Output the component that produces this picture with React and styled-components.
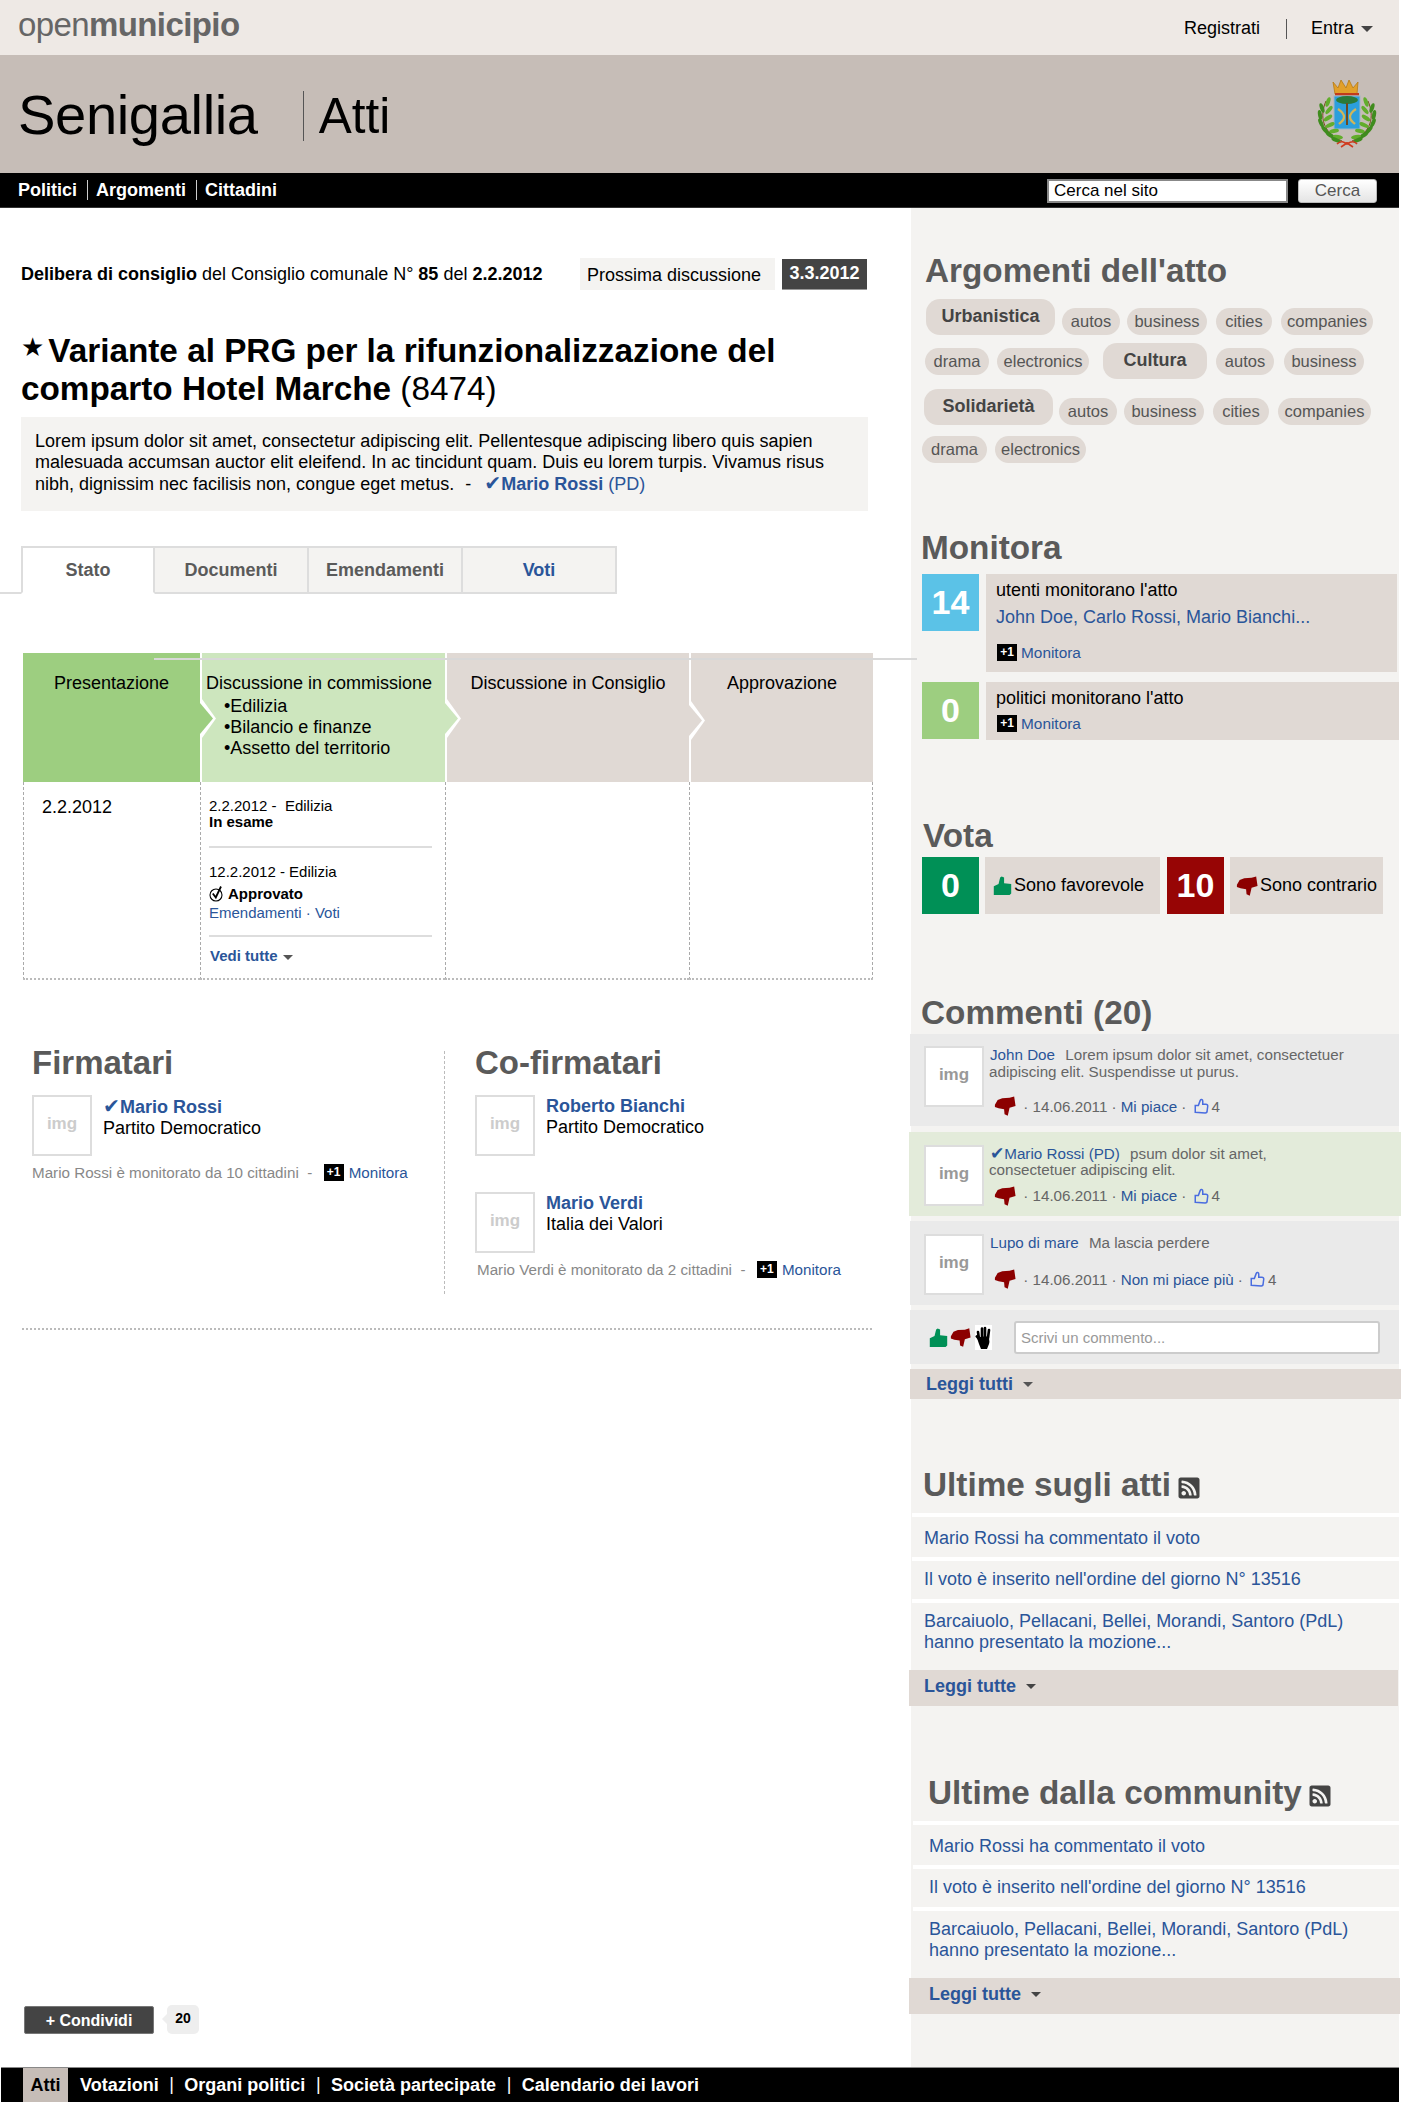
import React from "react";
import styled, { createGlobalStyle } from "styled-components";
import { FaRssSquare } from "react-icons/fa";

const BLUE = "#2a5599";
const HEAD = "#5a5a5a";
const SAND = "#e0d9d4";
const PALE = "#f4f3f1";

const Global = createGlobalStyle`
  html, body { margin: 0; padding: 0; background: #fff; }
  body { font-family: "Liberation Sans", Arial, sans-serif; color: #000; }
  * { box-sizing: border-box; }
  a { color: ${BLUE}; text-decoration: none; }
`;

const Page = styled.div`width: 1399px; position: relative;`;
const TopBar = styled.header`height: 55px; background: #eee9e5; display: flex; align-items: center; justify-content: space-between; padding: 0 26px 0 18px;`;
const Logo = styled.div`font-size: 33px; color: #666; letter-spacing: -0.6px; margin-top: -5px; b { font-weight: 700; }`;
const UserNav = styled.nav`display: flex; align-items: center; font-size: 18px; margin-top: 2px;`;
const UserDivider = styled.span`width: 1px; height: 20px; background: #555; margin: 0 24px 0 26px;`;
const Caret = styled.i`display: inline-block; width: 0; height: 0; border: ${p => p.$s || 5}px solid transparent; border-top-color: ${p => p.$c || "#444"}; border-bottom-width: 0; margin-left: ${p => p.$ml || 7}px; vertical-align: middle;`;
const Band = styled.div`height: 118px; background: #c6bdb7; display: flex; align-items: center; padding: 0 22px 0 18px;`;
const City = styled.h1`font-size: 56.2px; font-weight: 400; margin: 0 45px 0 0; letter-spacing: -0.4px;`;
const Section = styled.div`font-size: 49.5px; margin-top: 4px; padding-left: 15px; border-left: 1px solid #555; line-height: 50px; flex: 1;`;
const NavBar = styled.nav`height: 35px; background: #000; display: flex; align-items: center; padding: 0 22px 0 18px; border-bottom: 1px solid #333;`;
const NavLink = styled.a`color: #fff; font-size: 18px; font-weight: 700; line-height: 20px; padding-right: 10px; margin-right: 8px; border-right: ${p => p.$last ? "0" : "1px solid #ccc"};`;
const SearchInput = styled.input`width: 241px; height: 24px; margin: 1px 0 0 auto; border: 2px solid #888; background: #fff; font: 17px "Liberation Sans", sans-serif; padding: 0 5px; color: #000; &::placeholder { color: #000; opacity: 1; }`;
const SearchButton = styled.button`width: 79px; height: 24px; margin: 1px 0 0 10px; border: 1px solid #bbb; border-radius: 3px; background: linear-gradient(#fff, #e4e4e4); color: #555; font: 17px "Liberation Sans", sans-serif; padding: 0;`;

const Body = styled.div`display: flex; align-items: stretch;`;
const Main = styled.main`width: 911px; flex: none; padding: 50px 0 33px 21px; display: flex; flex-direction: column; position: relative;`;
const Side = styled.aside`width: 488px; flex: none; background: ${PALE};`;

const MetaRow = styled.div`display: flex; align-items: center; height: 32px; font-size: 18px;`;
const MetaText = styled.div`width: 559px; white-space: nowrap;`;
const NextLabel = styled.div`width: 195px; height: 32px; background: ${PALE}; line-height: 34px; padding-left: 7px;`;
const NextDate = styled.div`width: 85px; height: 31px; margin-left: 7px; background: #444; color: #fff; font-weight: 700; text-align: center; line-height: 29px; border-bottom: 1px solid #999;`;
const Title = styled.h2`font-size: 33.3px; line-height: 36px; font-weight: 700; margin: 43px 0 0; width: 860px; span { font-weight: 400; }`;
const Star = styled.span`font-size: 26px; position: relative; top: -6px; margin-right: 4px; font-family: "DejaVu Sans", sans-serif;`;
const Abstract = styled.div`width: 847px; height: 94px; margin-top: 10px; background: ${PALE}; padding: 14px 14px; font-size: 18px; line-height: 21px;`;
const StrongLink = styled.a`font-weight: 700;`;
const Check = styled.span`font-family: "DejaVu Sans", sans-serif; font-weight: 700; font-size: 1.12em; line-height: 1;`;
const Dash = styled.span`margin: 0 8px 0 6px;`;

const Tabs = styled.div`display: flex; margin: 35px 0 0 -21px; height: 48px;`;
const TabSpacer = styled.div`width: 21px; border-bottom: 2px solid #ddd;`;
const Tab = styled.div`width: ${p => p.$w}px; border: 2px solid #ddd; border-left-width: ${p => p.$first ? 2 : 0}px; border-bottom-color: ${p => p.$active ? "#fff" : "#ddd"}; background: ${p => p.$active ? "#fff" : PALE}; color: ${p => p.$link ? BLUE : HEAD}; font-weight: 700; font-size: 18px; text-align: center; line-height: 45px;`;

const Phases = styled.div`margin: 59px 0 0 2px; width: 850px; display: grid; grid-template-columns: 177px 245px 244px 184px;`;
const PhaseHead = styled.div`height: 129px; background: ${p => p.$bg}; border-left: ${p => p.$first ? 0 : "2px solid #fff"}; position: relative; padding-top: 20px; font-size: 18px; line-height: 21px; text-align: ${p => p.$left ? "left" : "center"}; padding-left: ${p => p.$left ? 4 : 0}px;
  &::before, &::after { content: ""; position: absolute; left: 0; width: 14px; clip-path: polygon(0 0, 100% 50%, 0 100%); }
  ${p => p.$arrow ? `
    &::before { top: ${p.$top || 46}px; height: 39px; left: 0; background: #fff; }
    &::after { top: ${(p.$top || 46) + 4}px; height: 31px; left: -2px; width: 13px; background: ${p.$arrow}; }
  ` : ""}`;
const PhaseList = styled.ul`list-style: none; margin: 2px 0 0 18px; padding: 0; li::before { content: "•"; }`;
const StrayRule = styled.div`position: absolute; left: 154px; top: 450px; width: 763px; height: 2px; background: #d8d8d8;`;
const PhaseCell = styled.div`height: 198px; border-left: 1px dashed #aaa; border-right: ${p => p.$last ? "1px dashed #aaa" : 0}; border-bottom: 2px dotted #bbb; padding: ${p => p.$date ? "15px 0 0 18px" : "16px 13px 0 8px"}; font-size: ${p => p.$date ? 18 : 15}px; line-height: ${p => p.$date ? "21px" : "16px"};`;
const Rule = styled.div`height: 2px; background: #ddd; margin: ${p => p.$m};`;
const ApprovedRow = styled.div`display: flex; align-items: center; gap: 4px; font-weight: 700; height: 22px; margin-top: 3px;`;
const SeeAll = styled.a`font-weight: 700; display: block; margin-left: 1px;`;

const Signers = styled.div`display: flex; margin: 71px 0 0 0; height: 243px;`;
const SignerCol = styled.div`width: ${p => p.$w}px; padding-left: ${p => p.$pl}px; border-right: ${p => p.$rule ? "1px dashed #bbb" : 0};`;
const ColTitle = styled.h3`font-size: 33px; line-height: 24px; color: ${HEAD}; margin: 0 0 20px;`;
const Signer = styled.div`display: flex; gap: 11px; margin-top: ${p => p.$mt || 0}px;`;
const Avatar = styled.div`width: 60px; height: 61px; flex: none; background: #fff; border: 2px solid #ddd; display: flex; align-items: center; justify-content: center; color: ${p => p.$dark ? "#999" : "#ccc"}; font-weight: 700; font-size: 17px; padding-bottom: 3px;`;
const SignerInfo = styled.div`font-size: 18px; line-height: 21px; padding-top: 1px;`;
const Follow = styled.div`display: flex; align-items: center; height: 20px; margin: 6px 0 0 ${p => p.$ml || 0}px; font-size: 15.2px; color: #888; white-space: nowrap;`;
const PlusOne = styled.span`display: inline-flex; width: 20px; height: 17px; background: #000; color: #fff; font-size: 12px; font-weight: 700; align-items: center; justify-content: center; flex: none; margin: ${p => p.$m || "0 4px 0 0"};`;
const DottedRule = styled.div`width: 850px; margin: 34px 0 0 1px; border-top: 2px dotted #bbb;`;

const Share = styled.div`display: flex; align-items: center; gap: 13px; margin: auto 0 0 3px; height: 29px;`;
const ShareButton = styled.div`width: 130px; height: 28px; background: #444; border: 1px solid #777; border-radius: 2px; color: #fff; font-weight: 700; font-size: 16px; text-align: center; line-height: 28px;`;
const ShareCount = styled.div`width: 32px; height: 29px; background: #eee; border-radius: 5px; font-weight: 700; font-size: 14px; text-align: center; line-height: 26px; position: relative;
  &::before { content: ""; position: absolute; left: -5px; top: 9px; border: 5px solid transparent; border-left: 0; border-right-color: #eee; }`;

const SideTitle = styled.h2`font-size: ${p => p.$fs || 33.3}px; line-height: 36px; color: ${HEAD}; margin: ${p => p.$mt}px 0 0 ${p => p.$x}px; white-space: nowrap; display: flex; align-items: center; svg { margin-left: 6px; color: #444; margin-top: 6px; }`;
const TagRow = styled.div`display: flex; align-items: ${p => p.$align}; margin: ${p => p.$mt}px 0 0 ${p => p.$x}px;`;
const TagPill = styled.span`display: block; flex: none; width: ${p => p.$w}px; height: ${p => p.$big ? 36 : 27}px; margin-left: ${p => p.$ml || 0}px; border-radius: 14px; background: ${SAND}; color: ${p => p.$big ? "#444" : "#555"}; font-weight: ${p => p.$big ? 700 : 400}; font-size: ${p => p.$big ? 18 : 16.5}px; text-align: center; line-height: ${p => p.$big ? 35 : 27}px;`;
const SideEnd = styled.div`height: 53px;`;

const Stat = styled.div`display: flex; gap: ${p => p.$gap || 7}px; margin: ${p => p.$mt}px 0 0 11px; align-items: flex-start;`;
const StatNumber = styled.div`width: 57px; height: 57px; flex: none; background: ${p => p.$bg}; color: #fff; font-weight: 700; font-size: 34px; text-align: center; line-height: 57px;`;
const StatPanel = styled.div`flex: 1; height: ${p => p.$h}px; background: ${SAND}; padding: 6px 10px; font-size: 18px; line-height: 21px; margin-right: ${p => p.$mr || 0}px;`;
const Names = styled.a`display: block; font-size: 18px; margin-top: 6px;`;
const FollowRow = styled.div`display: flex; align-items: center; margin-top: ${p => p.$mt}px; height: 18px; font-size: 15.4px; padding-left: 1px;`;
const VoteRow = styled.div`display: flex; margin: 3px 0 0 11px;`;
const VotePanel = styled.div`width: ${p => p.$w}px; height: 57px; background: ${SAND}; display: flex; align-items: center; gap: 2px; padding-left: ${p => p.$pl}px; font-size: 18px; margin: 0 ${p => p.$mr || 0}px 0 6px; white-space: nowrap;`;

const Comment = styled.article`margin: ${p => p.$mt}px ${p => p.$green ? -2 : 0}px 0 ${p => p.$green ? -2 : -1}px; height: ${p => p.$h}px; background: ${p => p.$green ? "#e3ebda" : "#eaeaea"}; display: flex; gap: 5px; padding: ${p => p.$pt}px 0 0 ${p => p.$green ? 15 : 14}px;`;
const CommentBody = styled.div`font-size: 15.2px; line-height: ${p => p.$lh || 17}px; color: #666; flex: 1;`;
const CommentAuthor = styled.a`margin: 0 6px 0 1px;`;
const CommentMeta = styled.div`display: flex; align-items: center; gap: 3px; height: 20px; margin: ${p => p.$mt}px 0 0 5px; white-space: nowrap; a { margin: 0 1px; }`;
const CommentForm = styled.div`margin: 5px 0 0 -1px; height: 54px; background: #eaeaea; display: flex; align-items: center; padding-left: 19px; gap: 2px;`;
const CommentInput = styled.input`width: 366px; height: 33px; margin-left: 20px; border: 2px solid #ccc; border-radius: 3px; background: #fff; font: 15px "Liberation Sans", sans-serif; padding: 0 5px; &::placeholder { color: #999; opacity: 1; }`;
const HandBox = styled.span`display: inline-flex; background: #fff; width: 17px; height: 25px; align-items: center; justify-content: center; margin-left: 2px;`;
const ReadMore = styled.div`margin: ${p => p.$mt || 0}px ${p => p.$mr}px 0 ${p => p.$ml}px; height: ${p => p.$h}px; background: ${SAND}; padding-left: ${p => p.$pl}px; font-size: 18px; font-weight: 700; display: flex; align-items: center; color: ${BLUE}; padding-bottom: ${p => p.$pb || 0}px;`;
const FeedList = styled.div`margin: ${p => p.$mt}px 0 0 ${p => p.$x}px;`;
const FeedItem = styled.a`display: block; border-top: 4px solid #fff; height: ${p => p.$h}px; padding: ${p => p.$pt}px 0 0 ${p => p.$pl}px; font-size: 18px; line-height: 21px; background: ${PALE};`;

const Footer = styled.footer`height: 35px; margin-left: 1px; background: #000; border-top: 1px solid #888; display: flex; align-items: stretch; padding-left: 22px; font-size: 18px; font-weight: 700; color: #fff; margin-bottom: 10px;`;
const FooterActive = styled.div`width: 45px; background: #c6bdb7; color: #000; text-align: center; line-height: 34px; margin-right: 12px;`;
const FooterLink = styled.a`color: #fff; line-height: 34px;`;
const FooterSep = styled.span`font-weight: 400; line-height: 33px; margin: 0 10.5px;`;

const ThumbSolid = ({ s = 20, c = "#009056" }) => (
  <svg width={s} height={s} viewBox="0 0 24 24" aria-hidden="true"><path d="M1 24V13l6-3 2-8 2-1.500 3 1.500v7l9 1v12l-2 2z" fill={c} /></svg>
);
const ThumbDown = ({ s = 22, c = "#8c0000" }) => (
  <svg width={s} height={s} viewBox="0 0 24 24" aria-hidden="true"><path d="M1 10.500 4 5.500 9 3.500 17 3 22 1.500 23.500 12 17 14 15 22.500 11.500 21 11 15.500 5 14.500 1 13z" fill={c} /></svg>
);
const ThumbOutline = () => (
  <svg width={15} height={16} viewBox="0 0 24 24" aria-hidden="true"><path d="M2 22V11h5l3-8c1-2 4-2 4 1v5h5c2 0 3 1 3 3l-1 8c0 2-1 3-3 3z" fill="none" stroke="#4a6de0" strokeWidth="2.400" /></svg>
);
const HandIcon = () => (
  <svg width={17} height={25} viewBox="0 0 17 25" aria-hidden="true">
    <g stroke="#000" strokeWidth="2.600" strokeLinecap="round" fill="none">
      <path d="M4 14 3 7M7 12V3.500M10 12V3M13 13l1-8M4 14 1.800 11.500" />
    </g>
    <path d="M2 13c0-1 12-2 12-1 0 4 1 4 0 7l-2 5H6l-2-5z" fill="#000" />
  </svg>
);
const CheckCircle = () => (
  <svg width={15} height={17} viewBox="0 0 15 17" aria-hidden="true"><circle cx="7" cy="9" r="6" fill="none" stroke="#000" strokeWidth="1.100" /><path d="M3.800 7.500l3 4L12 0.500" fill="none" stroke="#000" strokeWidth="1.800" /></svg>
);
const Leaf = ({ x, y, r, c = "#4d9a24" }) => <ellipse cx={x} cy={y} rx="5" ry="2" fill={c} transform={`rotate(${r} ${x} ${y})`} />;
const LEAVES = [
  [11, 23, -70], [5, 29, 70], [12, 31, -50], [3, 36, 80], [11, 39, -35], [4, 44, 65], [13, 46, -25], [8, 51, 50], [17, 52, -10], [13, 56, 35], [21, 58, 10], [19, 61, 25],
];
const Crest = () => (
  <svg width={60} height={70} viewBox="0 0 60 70" aria-hidden="true">
    <path d="M18 15l-2-12 5 6 3-8 5 8 3-8 4 8 5-6-1 12z" fill="#e2a02a" stroke="#b87a10" strokeWidth=".8" />
    <rect x="18" y="14" width="24" height="2.500" fill="#c23b1c" />
    <rect x="17" y="17" width="26" height="33" fill="#2c9fdc" stroke="#9fb6c6" />
    <ellipse cx="30" cy="21" rx="11" ry="4" fill="#2a7a3a" />
    <rect x="29" y="24" width="2" height="22" fill="#6b4b22" />
    <path d="M21 30c3 2 6 4 6 8s-3 5-5 7M39 30c-3 2-6 4-6 8s3 5 5 7" fill="none" stroke="#d2b658" strokeWidth="2.200" />
    <path d="M9 22C2 38 6 54 25 62M51 22c7 16 3 32-16 40" fill="none" stroke="#7a4a20" strokeWidth="1" />
    {LEAVES.map(([x, y, r], i) => <Leaf key={i} x={x} y={y} r={r} c={i % 2 ? "#3f8c1e" : "#62ad2c"} />)}
    {LEAVES.map(([x, y, r], i) => <Leaf key={i} x={60 - x} y={y} r={-r} c={i % 2 ? "#3f8c1e" : "#62ad2c"} />)}
    <path d="M20 65c4-4 7-2 10 0 3-2 7-4 10 0M24 68l6-4 6 4" fill="none" stroke="#d03a1e" strokeWidth="1.600" />
  </svg>
);

const TAGS = [
  { align: "flex-end", mt: 10, x: 15, items: [["Urbanistica", 129, 0, 1], ["autos", 58, 7], ["business", 80, 7], ["cities", 56, 9], ["companies", 92, 9]] },
  { align: "center", mt: 8, x: 14, items: [["drama", 64, 0], ["electronics", 92, 8], ["Cultura", 104, 14, 1], ["autos", 58, 9], ["business", 80, 10]] },
  { align: "flex-end", mt: 10, x: 13, items: [["Solidarietà", 129, 0, 1], ["autos", 58, 6], ["business", 80, 7], ["cities", 56, 9], ["companies", 93, 9]] },
  { align: "flex-end", mt: 11, x: 11, items: [["drama", 65, 0], ["electronics", 91, 8]] },
];

const FEED = (pl) => (
  <>
    <FeedItem href="#" $h={44} $pt={11} $pl={pl}>Mario Rossi ha commentato il voto</FeedItem>
    <FeedItem href="#" $h={42} $pt={8} $pl={pl}>Il voto è inserito nell'ordine del giorno N° 13516</FeedItem>
    <FeedItem href="#" $h={71} $pt={8} $pl={pl}>Barcaiuolo, Pellacani, Bellei, Morandi, Santoro (PdL)<br />hanno presentato la mozione...</FeedItem>
  </>
);

const Meta = ({ mt, text = "Mi piace" }) => (
  <CommentMeta $mt={mt}>
    <ThumbDown />
    <span>&nbsp;· 14.06.2011 ·</span>
    <a href="#">{text}</a>
    <span>·&nbsp;</span>
    <ThumbOutline />
    <span>4</span>
  </CommentMeta>
);

export default function App() {
  return (
    <Page>
      <Global />
      <TopBar>
        <Logo>open<b>municipio</b></Logo>
        <UserNav>Registrati<UserDivider />Entra<Caret $s={6} /></UserNav>
      </TopBar>
      <Band>
        <City>Senigallia</City>
        <Section>Atti</Section>
        <Crest />
      </Band>
      <NavBar>
        <NavLink href="#">Politici</NavLink>
        <NavLink href="#">Argomenti</NavLink>
        <NavLink href="#" $last>Cittadini</NavLink>
        <SearchInput placeholder="Cerca nel sito" />
        <SearchButton>Cerca</SearchButton>
      </NavBar>
      <Body>
        <Main>
          <MetaRow>
            <MetaText><b>Delibera di consiglio</b> del Consiglio comunale N° <b>85</b> del <b>2.2.2012</b></MetaText>
            <NextLabel>Prossima discussione</NextLabel>
            <NextDate>3.3.2012</NextDate>
          </MetaRow>
          <Title><Star>★</Star>Variante al PRG per la rifunzionalizzazione del<br />comparto Hotel Marche <span>(8474)</span></Title>
          <Abstract>
            Lorem ipsum dolor sit amet, consectetur adipiscing elit. Pellentesque adipiscing libero quis sapien malesuada accumsan auctor elit eleifend. In ac tincidunt quam. Duis eu lorem turpis. Vivamus risus nibh, dignissim nec facilisis non, congue eget metus. <Dash>-</Dash> <StrongLink href="#"><Check>✔</Check>Mario Rossi</StrongLink> <a href="#">(PD)</a>
          </Abstract>
          <Tabs>
            <TabSpacer />
            <Tab $w={134} $first $active>Stato</Tab>
            <Tab $w={154}>Documenti</Tab>
            <Tab $w={154}>Emendamenti</Tab>
            <Tab $w={154} $link>Voti</Tab>
          </Tabs>
          <Phases>
            <PhaseHead $bg="#9dce80" $first>Presentazione</PhaseHead>
            <PhaseHead $bg="#cde6be" $arrow="#9dce80" $left>
              Discussione in commissione
              <PhaseList><li>Edilizia</li><li>Bilancio e finanze</li><li>Assetto del territorio</li></PhaseList>
            </PhaseHead>
            <PhaseHead $bg={SAND} $arrow="#cde6be">Discussione in Consiglio</PhaseHead>
            <PhaseHead $bg={SAND} $arrow={SAND} $top={48}>Approvazione</PhaseHead>
            <PhaseCell $date>2.2.2012</PhaseCell>
            <PhaseCell>
              2.2.2012 -&nbsp; Edilizia<br /><b>In esame</b>
              <Rule $m="16px 0" />
              12.2.2012 - Edilizia
              <ApprovedRow><CheckCircle />Approvato</ApprovedRow>
              <a href="#">Emendamenti · Voti</a>
              <Rule $m="14px 0 11px" />
              <SeeAll href="#">Vedi tutte<Caret $c="#555" $ml={5} /></SeeAll>
            </PhaseCell>
            <PhaseCell />
            <PhaseCell $last />
          </Phases>
          <StrayRule />
          <Signers>
            <SignerCol $w={424} $pl={11} $rule>
              <ColTitle>Firmatari</ColTitle>
              <Signer>
                <Avatar>img</Avatar>
                <SignerInfo><StrongLink href="#"><Check>✔</Check>Mario Rossi</StrongLink><br />Partito Democratico</SignerInfo>
              </Signer>
              <Follow>Mario Rossi è monitorato da 10 cittadini &nbsp;-&nbsp;&nbsp;<PlusOne $m="0 5px 0 3px">+1</PlusOne><a href="#">Monitora</a></Follow>
            </SignerCol>
            <SignerCol $w={426} $pl={30}>
              <ColTitle>Co-firmatari</ColTitle>
              <Signer>
                <Avatar>img</Avatar>
                <SignerInfo><StrongLink href="#">Roberto Bianchi</StrongLink><br />Partito Democratico</SignerInfo>
              </Signer>
              <Signer $mt={36}>
                <Avatar>img</Avatar>
                <SignerInfo><StrongLink href="#">Mario Verdi</StrongLink><br />Italia dei Valori</SignerInfo>
              </Signer>
              <Follow $ml={2}>Mario Verdi è monitorato da 2 cittadini &nbsp;-&nbsp;&nbsp;<PlusOne $m="0 5px 0 3px">+1</PlusOne><a href="#">Monitora</a></Follow>
            </SignerCol>
          </Signers>
          <DottedRule />
          <Share>
            <ShareButton>+ Condividi</ShareButton>
            <ShareCount>20</ShareCount>
          </Share>
        </Main>
        <Side>
          <SideTitle $mt={45} $x={14}>Argomenti dell'atto</SideTitle>
          {TAGS.map((row, i) => (
            <TagRow key={i} $align={row.align} $mt={row.mt} $x={row.x}>
              {row.items.map(([label, w, ml, big]) => (
                <TagPill key={label} $w={w} $ml={ml} $big={big}>{label}</TagPill>
              ))}
            </TagRow>
          ))}

          <SideTitle $mt={67} $x={10}>Monitora</SideTitle>
          <Stat $mt={8}>
            <StatNumber $bg="#5bc2e7">14</StatNumber>
            <StatPanel $h={98} $mr={2}>
              utenti monitorano l'atto
              <Names href="#">John Doe, Carlo Rossi, Mario Bianchi...</Names>
              <FollowRow $mt={15}><PlusOne>+1</PlusOne><a href="#">Monitora</a></FollowRow>
            </StatPanel>
          </Stat>
          <Stat $mt={10}>
            <StatNumber $bg="#9dce80">0</StatNumber>
            <StatPanel $h={58}>
              politici monitorano l'atto
              <FollowRow $mt={5}><PlusOne>+1</PlusOne><a href="#">Monitora</a></FollowRow>
            </StatPanel>
          </Stat>

          <SideTitle $mt={78} $x={12}>Vota</SideTitle>
          <VoteRow>
            <StatNumber $bg="#009056">0</StatNumber>
            <VotePanel $w={175} $pl={8} $mr={7}><ThumbSolid s={19} />Sono favorevole</VotePanel>
            <StatNumber $bg="#970505">10</StatNumber>
            <VotePanel $w={153} $pl={6}><ThumbDown />Sono contrario</VotePanel>
          </VoteRow>

          <SideTitle $mt={81} $x={10}>Commenti (20)</SideTitle>
          <Comment $mt={3} $h={92} $pt={12}>
            <Avatar $dark>img</Avatar>
            <CommentBody>
              <CommentAuthor href="#">John Doe</CommentAuthor> Lorem ipsum dolor sit amet, consectetuer<br />adipiscing elit. Suspendisse ut purus.
              <Meta mt={16} />
            </CommentBody>
          </Comment>
          <Comment $mt={6} $h={84} $pt={13} $green>
            <Avatar $dark>img</Avatar>
            <CommentBody $lh={16}>
              <CommentAuthor href="#"><Check>✔</Check>Mario Rossi (PD)</CommentAuthor> psum dolor sit amet,<br />consectetuer adipiscing elit.
              <Meta mt={8} />
            </CommentBody>
          </Comment>
          <Comment $mt={5} $h={84} $pt={13}>
            <Avatar $dark>img</Avatar>
            <CommentBody>
              <CommentAuthor href="#">Lupo di mare</CommentAuthor> Ma lascia perdere
              <Meta mt={18} text="Non mi piace più" />
            </CommentBody>
          </Comment>
          <CommentForm>
            <ThumbSolid s={19} />
            <ThumbDown s={21} />
            <HandBox><HandIcon /></HandBox>
            <CommentInput placeholder="Scrivi un commento..." />
          </CommentForm>
          <ReadMore $mt={5} $ml={-1} $mr={-2} $h={30} $pl={16}>Leggi tutti<Caret $c="#555" $ml={10} /></ReadMore>

          <SideTitle $mt={68} $x={12}>Ultime sugli atti<FaRssSquare size={24} /></SideTitle>
          <FeedList $mt={10} $x={1}>{FEED(12)}</FeedList>
          <ReadMore $ml={-2} $mr={1} $h={36} $pl={15} $pb={3}>Leggi tutte<Caret $c="#444" $ml={10} /></ReadMore>

          <SideTitle $mt={69} $x={17}>Ultime dalla community<FaRssSquare size={24} /></SideTitle>
          <FeedList $mt={10} $x={2}>{FEED(16)}</FeedList>
          <ReadMore $ml={-2} $mr={-1} $h={36} $pl={20} $pb={3}>Leggi tutte<Caret $c="#444" $ml={10} /></ReadMore>
          <SideEnd />
        </Side>
      </Body>
      <Footer>
        <FooterActive>Atti</FooterActive>
        <FooterLink href="#">Votazioni</FooterLink><FooterSep>|</FooterSep>
        <FooterLink href="#">Organi politici</FooterLink><FooterSep>|</FooterSep>
        <FooterLink href="#">Società partecipate</FooterLink><FooterSep>|</FooterSep>
        <FooterLink href="#">Calendario dei lavori</FooterLink>
      </Footer>
    </Page>
  );
}
